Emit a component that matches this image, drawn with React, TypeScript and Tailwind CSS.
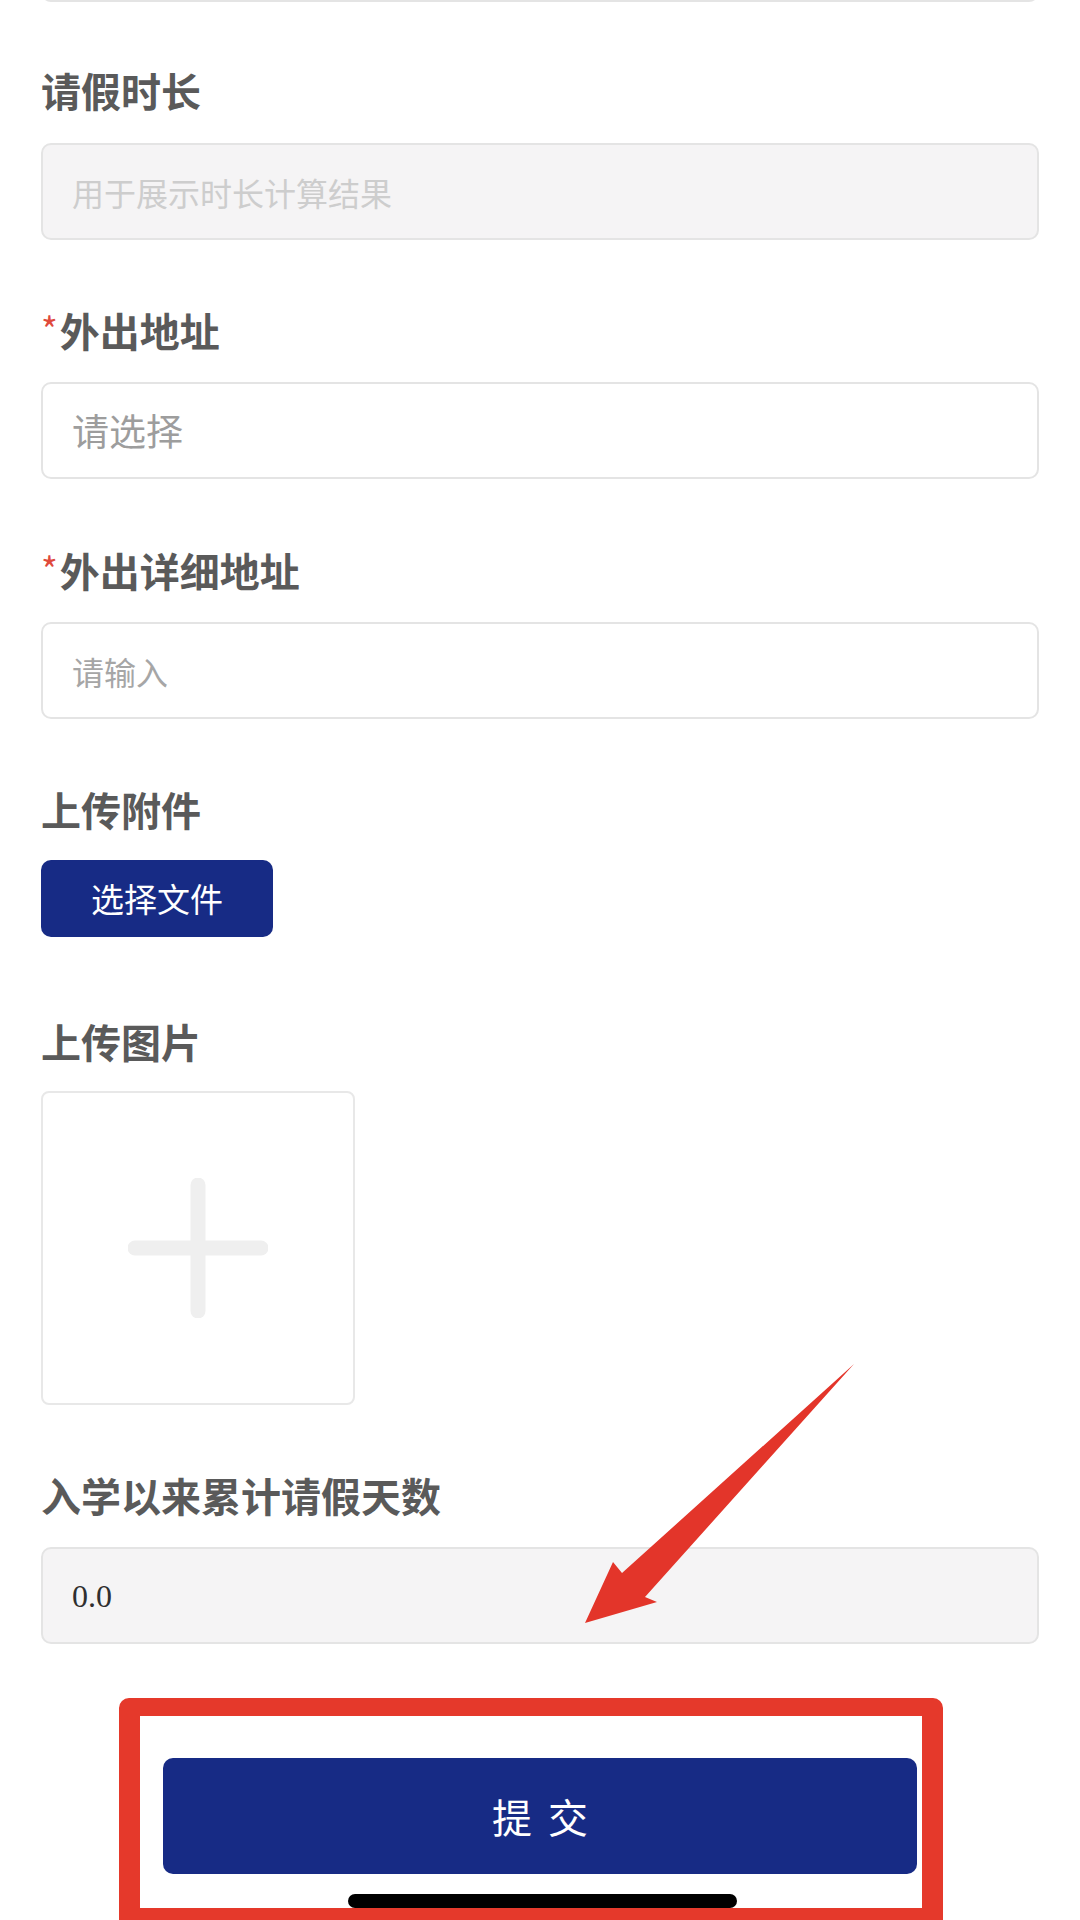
import React from "react"

const Label = ({ text, required, className = "" }: { text: string; required?: boolean; className?: string }) => (
  <div className={`flex items-start h-[40px] text-[40px] leading-[40px] font-bold text-[#5a5a5a] ${className}`}>
    {required && <span className="text-[36px] leading-[36px] font-normal text-[#df4a3c] mr-[2px]">*</span>}
    <span>{text}</span>
  </div>
)

const Box = ({ children, muted, className = "" }: { children: React.ReactNode; muted?: boolean; className?: string }) => (
  <div
    className={`flex items-center h-[97px] px-[29px] rounded-[10px] border-2 border-[#e4e4e4] ${
      muted ? "bg-[#f5f4f5]" : "bg-white"
    } ${className}`}
  >
    {children}
  </div>
)

const App: React.FC = () => {
  return (
    <div className="relative w-[1080px] h-[1920px] overflow-hidden bg-white font-['Noto_Sans_CJK_SC','Noto_Sans',sans-serif]">
      <div className="flex flex-col px-[41px]">
        {/* tail of the field above, scrolled off */}
        <div className="h-[97px] -mt-[95px] rounded-[10px] border-2 border-[#e4e4e4] bg-white" />

        <Label text="请假时长" className="mt-[68px]" />
        <Box muted className="mt-[33px]">
          <span className="text-[32px] text-[#cdcdcd]">用于展示时长计算结果</span>
        </Box>

        <Label text="外出地址" required className="mt-[70px]" />
        <Box className="mt-[32px]">
          <span className="text-[37px] text-[#9d9d9d]">请选择</span>
        </Box>

        <Label text="外出详细地址" required className="mt-[71px]" />
        <Box className="mt-[32px]">
          <span className="text-[32px] text-[#a6a6a6]">请输入</span>
        </Box>

        <Label text="上传附件" className="mt-[70px]" />
        <button className="mt-[31px] w-[232px] h-[77px] rounded-[10px] bg-[#172b85] text-white text-[33px] flex items-center justify-center">
          选择文件
        </button>

        <Label text="上传图片" className="mt-[84px]" />
        <div className="mt-[30px] w-[314px] h-[314px] rounded-[8px] border-2 border-[#e8e8e8] flex items-center justify-center">
          <svg width="140" height="140" viewBox="0 0 140 140">
            <line x1="70" y1="7" x2="70" y2="133" stroke="#efefef" strokeWidth="15" strokeLinecap="round" />
            <line x1="7" y1="70" x2="133" y2="70" stroke="#efefef" strokeWidth="15" strokeLinecap="round" />
          </svg>
        </div>

        <Label text="入学以来累计请假天数" className="mt-[70px]" />
        <Box muted className="mt-[32px] h-[96px]">
          <span className="text-[32px] text-[#2f2f2f] font-['Liberation_Serif',serif]">0.0</span>
        </Box>
      </div>

      {/* highlighted submit area */}
      <div className="relative mt-[54px] ml-[119px] w-[824px] border-[#e5392b] border-t-[18px] border-x-[21px] border-b-[13px] rounded-t-[10px] pt-[42px] pl-[23px] pr-[5px] pb-[34px] bg-white">
        <button className="w-full h-[116px] rounded-[10px] bg-[#172b85] text-white text-[40px] flex items-center justify-center gap-[16px]">
          <span>提</span>
          <span>交</span>
        </button>
        <div className="absolute bottom-0 left-[208px] w-[389px] h-[14px] rounded-full bg-black" />
      </div>

      {/* red arrow annotation */}
      <svg className="absolute left-[580px] top-[1360px] pointer-events-none" width="280" height="270" viewBox="0 0 280 270">
        <polygon points="274,4 42,213 33,202 5,263 77,242 65,237" fill="#e3352a" />
      </svg>
    </div>
  )
}

export default App
